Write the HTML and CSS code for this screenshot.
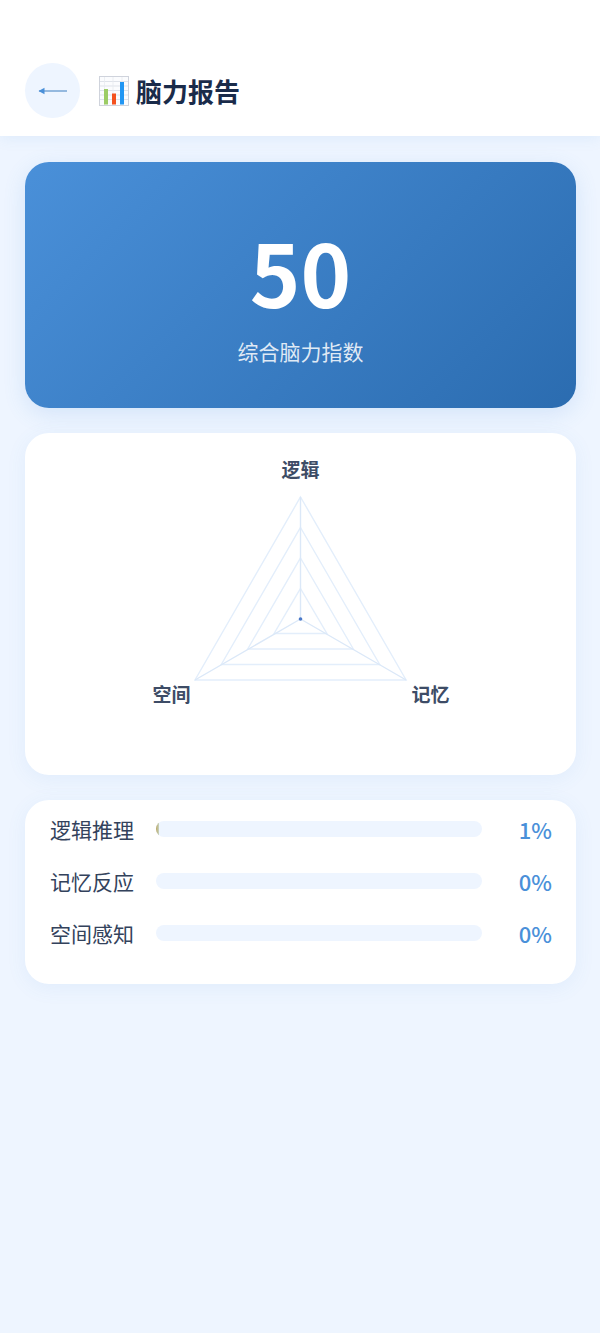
FILE: index.html
```html
<!DOCTYPE html>
<html lang="zh-CN">
<head>
<meta charset="utf-8">
<title>脑力报告</title>
<link rel="stylesheet" href="styles.css">
</head>
<body>
<div class="page">
  <header class="header">
    <button class="back" type="button" aria-label="返回">
      <svg class="back-icon" viewBox="0 0 30 12" width="30" height="12"><path d="M1 6H29" stroke="#6f9fd2" stroke-width="1.4" fill="none"/><path d="M0.5 6L6.5 2.8V9.2Z" fill="#4a90d9"/></svg>
    </button>
    <h1 class="title">
      <svg class="emoji" viewBox="0 0 30 30" width="30" height="30">
        <rect x="0.5" y="0.5" width="29" height="29" fill="#fbfcfe" stroke="#cfd3dc"/>
        <path d="M1 5.5H29M1 10H29M1 14.5H29M1 19H29M1 23.5H29" stroke="#dfe3ea" stroke-width="1"/>
        <path d="M5.5 1V29M14 1V29M23 1V29" stroke="#e8ebf0" stroke-width="0.8"/>
        <rect x="5" y="13" width="4" height="15.5" fill="#9ccc65"/>
        <rect x="13" y="17.5" width="4" height="11" fill="#f4511e"/>
        <rect x="21" y="6" width="4" height="22.5" fill="#2196f3"/>
      </svg>
      <span>脑力报告</span>
    </h1>
  </header>
  <main class="content">
    <section class="score-card">
      <div class="score">50</div>
      <div class="score-label">综合脑力指数</div>
    </section>
    <section class="card radar-card">
      <svg class="radar" viewBox="0 0 551 342" width="551" height="342">
        <g fill="none" stroke="#e3eefb" stroke-width="1.4">
          <polygon points="275.5,64 381.1,247 170,247"/>
          <polygon points="275.5,94.500 354.700,231.500 196.300,231.500"/>
          <polygon points="275.5,125 328.300,216 222.700,216"/>
          <polygon points="275.5,155.500 301.900,200.500 249.100,200.500"/>
          <path d="M275.500 186V64M275.500 186L381.100 247M275.500 186L170 247" stroke="#dbe8f8"/>
        </g>
        <circle cx="275.500" cy="186" r="1.800" fill="#4a78c8"/>
        <text class="axis" x="275.500" y="44">逻辑</text>
        <text class="axis" x="405.500" y="269">记忆</text>
        <text class="axis" x="146.500" y="269">空间</text>
      </svg>
    </section>
    <section class="card stats">
      <div class="row">
        <span class="name">逻辑推理</span>
        <div class="track"><div class="fill" style="width:1%"></div></div>
        <span class="pct">1%</span>
      </div>
      <div class="row">
        <span class="name">记忆反应</span>
        <div class="track"></div>
        <span class="pct">0%</span>
      </div>
      <div class="row">
        <span class="name">空间感知</span>
        <div class="track"></div>
        <span class="pct">0%</span>
      </div>
    </section>
  </main>
</div>
</body>
</html>
```
FILE: styles.css
```css
* { box-sizing: border-box; }
html, body { margin: 0; padding: 0; }
body {
  background: #eef5ff;
  font-family: "Noto Sans CJK SC", "Noto Sans", sans-serif;
  color: #1a2b4a;
}
.page {
  width: 600px;
  height: 1333px;
  overflow: hidden;
  background: #eef5ff;
  display: flex;
  flex-direction: column;
}
.header {
  height: 136px;
  padding: 63px 0 18px 25px;
  background: #fff;
  display: flex;
  align-items: center;
  gap: 19px;
  box-shadow: 0 2px 14px rgba(74, 144, 217, 0.1);
  position: relative;
}
.back {
  width: 55px;
  height: 55px;
  border: 0;
  padding: 0;
  border-radius: 50%;
  background: #eef5ff;
  display: flex;
  align-items: center;
  justify-content: center;
}
.back-icon { display: block; }
.title {
  margin: 0;
  font-size: 26px;
  line-height: 38px;
  font-weight: 700;
  color: #1a2b4a;
  display: flex;
  align-items: center;
  gap: 7px;
}
.emoji { display: block; }
.content {
  padding: 26px 24px 0 25px;
  display: flex;
  flex-direction: column;
  gap: 25px;
}
.score-card {
  height: 246px;
  border-radius: 24px;
  background: linear-gradient(135deg, #4a90d9 0%, #2b6cb0 100%);
  box-shadow: 0 6px 22px rgba(74, 144, 217, 0.16);
  color: #fff;
  display: flex;
  flex-direction: column;
  align-items: center;
  padding-top: 49px;
}
.score {
  font-size: 86px;
  line-height: 120px;
  font-weight: 700;
}
.score-label {
  font-size: 21px;
  line-height: 30px;
  margin-top: 5px;
  color: rgba(255, 255, 255, 0.85);
}
.card {
  background: #fff;
  border-radius: 24px;
  box-shadow: 0 4px 20px rgba(74, 144, 217, 0.08);
}
.radar-card { height: 342px; }
.radar { display: block; }
.axis {
  font-size: 19px;
  font-weight: 700;
  fill: #3d4c66;
  text-anchor: middle;
}
.stats {
  height: 184px;
  padding: 14px 24px 0 25px;
  display: flex;
  flex-direction: column;
  gap: 22px;
}
.row {
  height: 30px;
  display: flex;
  align-items: center;
}
.name {
  width: 85px;
  font-size: 21px;
  line-height: 30px;
  white-space: nowrap;
  color: #33425c;
}
.track {
  width: 326px;
  height: 16px;
  margin-left: 21px;
  border-radius: 8px;
  background: #eef5ff;
  overflow: hidden;
}
.fill {
  height: 100%;
  background: linear-gradient(90deg, #b8a25a, #c9d6c6);
  border-radius: 8px;
}
.pct {
  margin-left: auto;
  font-size: 22px;
  line-height: 30px;
  font-weight: 500;
  color: #4a90d9;
}
```
